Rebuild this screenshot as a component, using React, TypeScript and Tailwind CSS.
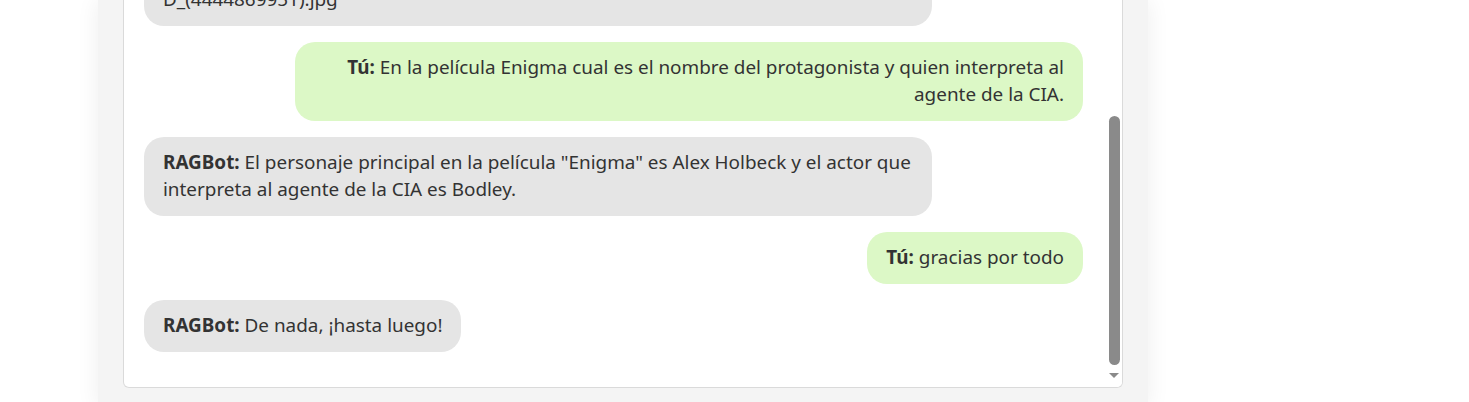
import React from "react";

const font = { fontFamily: '"Noto Sans", "Open Sans", sans-serif' };

function Bubble({ who, side, children }: { who: string; side: "bot" | "user"; children: React.ReactNode }) {
  const isUser = side === "user";
  return (
    <div className={isUser ? "flex justify-end" : "flex justify-start"}>
      <div
        className={
          (isUser ? "bg-[#dcf8c6] text-right " : "bg-[#e5e5e5] text-left ") +
          "max-w-[788px] rounded-[20px] px-[19px] pt-[12px] pb-[13px] text-[18.9px] leading-[27px] text-[#333333] break-words"
        }
      >
        <b className="font-bold">{who}:</b> {children}
      </div>
    </div>
  );
}

export default function App() {
  return (
    <div className="min-h-screen bg-white overflow-hidden" style={font}>
      <div className="ml-[98px] w-[1050px] bg-[#f4f4f4] shadow-[0_0_22px_rgba(0,0,0,0.07)] px-[25px] pb-[20px]">
        <div className="h-[388px] flex bg-white border-x border-b border-[#dadada] rounded-b-[6px] overflow-hidden">
          <div className="flex-1 min-w-0 flex flex-col justify-end gap-4 pl-5 pr-[23px] pb-[35px] overflow-hidden">
            <Bubble who="RAGBot" side="bot">
              Aquí tienes el cartel de la película Enigma:
              <br />
              https://upload.wikimedia.org/wikipedia/en/thumb/Enigma_film_poster_ENIGMA_2001_EDITE
              <br />
              D_(4444869951).jpg
            </Bubble>
            <Bubble who="Tú" side="user">
              En la película Enigma cual es el nombre del protagonista y quien interpreta al agente de la CIA.
            </Bubble>
            <Bubble who="RAGBot" side="bot">
              El personaje principal en la película "Enigma" es Alex Holbeck y el actor que interpreta al agente de la CIA es Bodley.
            </Bubble>
            <Bubble who="Tú" side="user">
              gracias por todo
            </Bubble>
            <Bubble who="RAGBot" side="bot">
              De nada, ¡hasta luego!
            </Bubble>
          </div>
          <div className="w-[16px] flex flex-col items-center pt-[116px] bg-white">
            <div className="w-[11px] h-[249px] rounded-full bg-[#8a8a8a]" />
            <div className="mt-[8px] w-0 h-0 border-l-[5px] border-r-[5px] border-t-[5px] border-l-transparent border-r-transparent border-t-[#8a8a8a]" />
          </div>
        </div>
      </div>
    </div>
  );
}
